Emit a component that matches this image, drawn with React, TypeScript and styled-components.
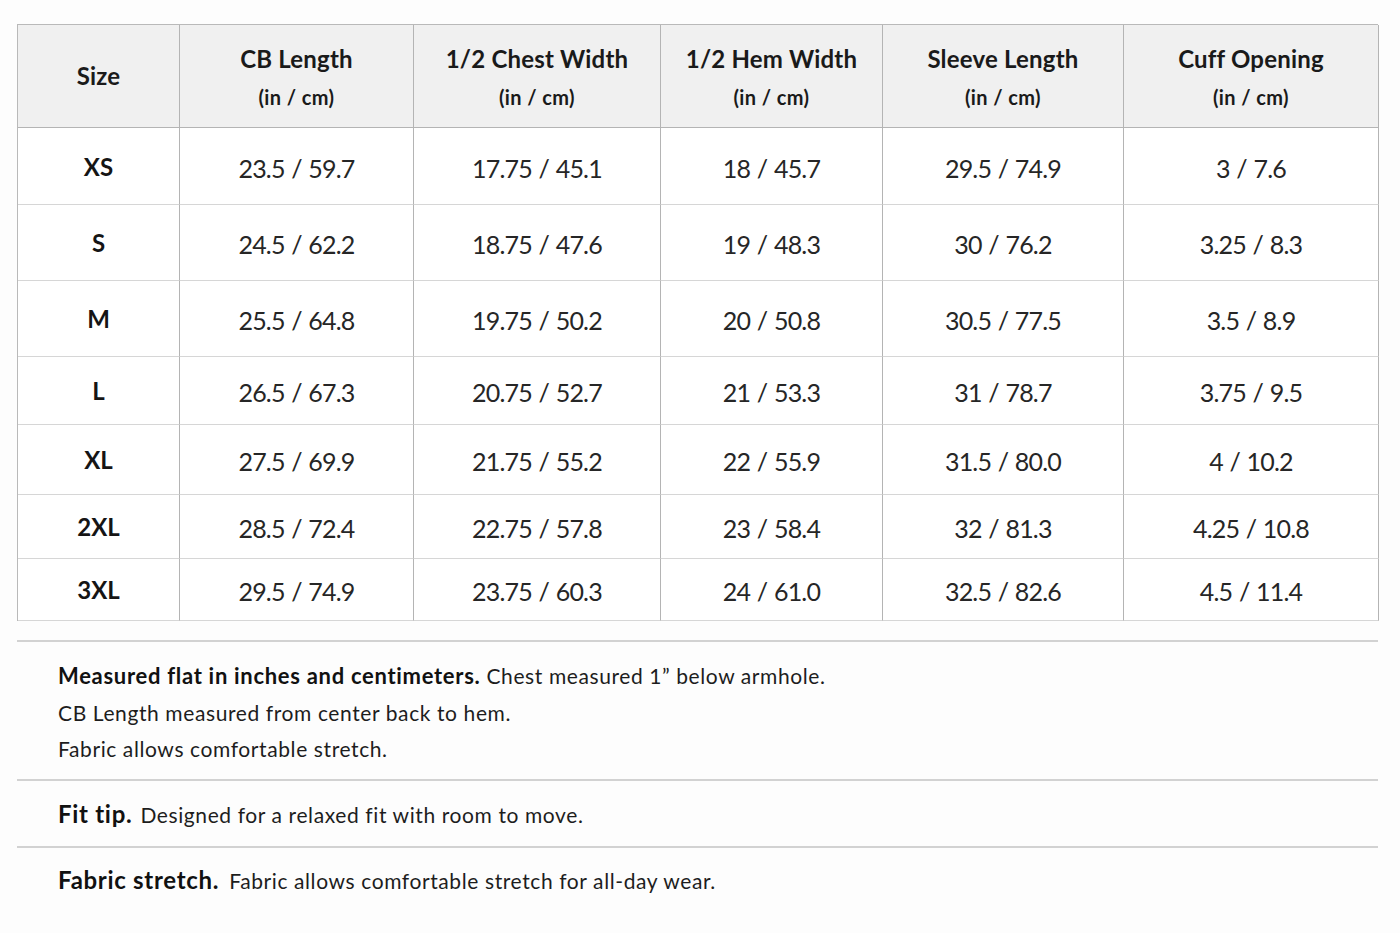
import React from "react";
import styled, { createGlobalStyle } from "styled-components";

const GlobalStyle = createGlobalStyle`
  html, body { margin: 0; padding: 0; background: #fdfdfd; }
  body { font-family: Lato, "Noto Sans", sans-serif; color: #1b1b1b; }
`;

const COLS = "162px 234px 247px 222px 241px 255px";

const Page = styled.div`
  width: 1361px;
  padding: 24px 22px 0 17px;
`;

const Table = styled.div`
  border-top: 1px solid #b9b9b9;
  border-left: 1px solid #b9b9b9;
`;

const Row = styled.div<{ $h: number; $head?: boolean }>`
  display: grid;
  grid-template-columns: ${COLS};
  height: ${(p) => p.$h}px;
  background: ${(p) => (p.$head ? "#f0f0f0" : "#ffffff")};
`;

const Cell = styled.div<{ $head?: boolean }>`
  display: flex;
  flex-direction: column;
  align-items: center;
  justify-content: center;
  border-right: 1px solid #b4b4b4;
  border-bottom: 1px solid ${(p) => (p.$head ? "#b4b4b4" : "#d6d6d6")};
  box-sizing: border-box;
`;

const HeadTitle = styled.div`
  font-family: Lato, sans-serif;
  font-weight: 700;
  font-size: 24px;
  line-height: 28px;
  letter-spacing: 0.2px;
  color: #1a1a1a;
`;

const HeadUnit = styled.div`
  font-family: Lato, sans-serif;
  font-weight: 700;
  font-size: 20px;
  line-height: 22px;
  letter-spacing: 0.4px;
  margin-top: 13px;
  color: #1a1a1a;
`;

const SizeLabel = styled.div`
  font-family: Lato, sans-serif;
  font-weight: 700;
  font-size: 24px;
  color: #151515;
`;

const Value = styled.div`
  font-family: Lato, sans-serif;
  font-weight: 400;
  font-size: 25px;
  padding-top: 3px;
  letter-spacing: -0.8px;
  word-spacing: 1px;
  color: #262626;
`;

const Notes = styled.div`
  margin-top: 19px;
`;

const NoteBlock = styled.div<{ $pt: number; $pb: number }>`
  border-top: 2px solid #d2d2d2;
  padding: ${(p) => p.$pt}px 41px ${(p) => p.$pb}px;
`;

const NoteLine = styled.div`
  font-family: Lato, sans-serif;
  font-size: 21px;
  line-height: 36.5px;
  letter-spacing: 0.6px;
  color: #1d1d1d;
`;

const Strong = styled.span<{ $size?: number; $gap?: number }>`
  font-weight: 700;
  font-size: ${(p) => p.$size ?? 22}px;
  letter-spacing: 0.7px;
  margin-right: ${(p) => p.$gap ?? 0}px;
  color: #111;
`;

const headers = [
  ["CB Length", "(in / cm)"],
  ["1/2 Chest Width", "(in / cm)"],
  ["1/2 Hem Width", "(in / cm)"],
  ["Sleeve Length", "(in / cm)"],
  ["Cuff Opening", "(in / cm)"],
];

const rows: { size: string; h: number; vals: string[] }[] = [
  { size: "XS", h: 77, vals: ["23.5 / 59.7", "17.75 / 45.1", "18 / 45.7", "29.5 / 74.9", "3 / 7.6"] },
  { size: "S", h: 76, vals: ["24.5 / 62.2", "18.75 / 47.6", "19 / 48.3", "30 / 76.2", "3.25 / 8.3"] },
  { size: "M", h: 76, vals: ["25.5 / 64.8", "19.75 / 50.2", "20 / 50.8", "30.5 / 77.5", "3.5 / 8.9"] },
  { size: "L", h: 68, vals: ["26.5 / 67.3", "20.75 / 52.7", "21 / 53.3", "31 / 78.7", "3.75 / 9.5"] },
  { size: "XL", h: 70, vals: ["27.5 / 69.9", "21.75 / 55.2", "22 / 55.9", "31.5 / 80.0", "4 / 10.2"] },
  { size: "2XL", h: 64, vals: ["28.5 / 72.4", "22.75 / 57.8", "23 / 58.4", "32 / 81.3", "4.25 / 10.8"] },
  { size: "3XL", h: 62, vals: ["29.5 / 74.9", "23.75 / 60.3", "24 / 61.0", "32.5 / 82.6", "4.5 / 11.4"] },
];

export default function App() {
  return (
    <>
      <GlobalStyle />
      <Page>
        <Table>
          <Row $h={103} $head>
            <Cell $head>
              <HeadTitle>Size</HeadTitle>
            </Cell>
            {headers.map(([t, u]) => (
              <Cell $head key={t}>
                <HeadTitle>{t}</HeadTitle>
                <HeadUnit>{u}</HeadUnit>
              </Cell>
            ))}
          </Row>
          {rows.map((r) => (
            <Row $h={r.h} key={r.size}>
              <Cell>
                <SizeLabel>{r.size}</SizeLabel>
              </Cell>
              {r.vals.map((v, i) => (
                <Cell key={i}>
                  <Value>{v}</Value>
                </Cell>
              ))}
            </Row>
          ))}
        </Table>
        <Notes>
          <NoteBlock $pt={16} $pb={11}>
            <NoteLine>
              <Strong $gap={6}>Measured flat in inches and centimeters.</Strong>
              Chest measured 1” below armhole.
            </NoteLine>
            <NoteLine>CB Length measured from center back to hem.</NoteLine>
            <NoteLine>Fabric allows comfortable stretch.</NoteLine>
          </NoteBlock>
          <NoteBlock $pt={15} $pb={13}>
            <NoteLine>
              <Strong $size={24} $gap={8}>Fit tip.</Strong>
              Designed for a relaxed fit with room to move.
            </NoteLine>
          </NoteBlock>
          <NoteBlock $pt={14} $pb={30}>
            <NoteLine>
              <Strong $size={24} $gap={10}>Fabric stretch.</Strong>
              Fabric allows comfortable stretch for all-day wear.
            </NoteLine>
          </NoteBlock>
        </Notes>
      </Page>
    </>
  );
}
